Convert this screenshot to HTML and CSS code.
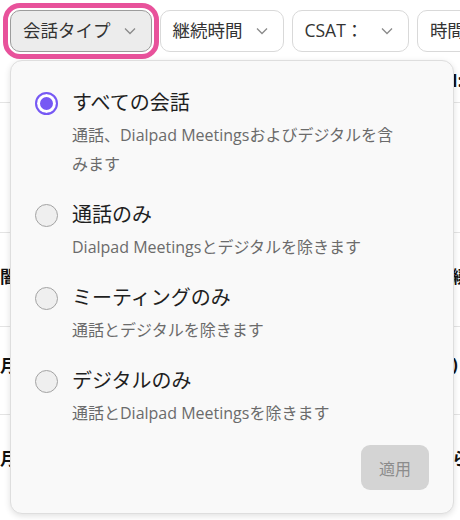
FILE: index.html
```html
<!DOCTYPE html>
<html lang="ja">
<head>
<meta charset="utf-8">
<link rel="stylesheet" href="styles.css">
</head>
<body>
<div class="page">
  <div class="toolbar">
    <button class="chip chip-active">会話タイプ<svg class="chev" viewBox="0 0 12 8"><path d="M1 1.5l5 5 5-5"/></svg></button>
    <button class="chip">継続時間<svg class="chev" viewBox="0 0 12 8"><path d="M1 1.5l5 5 5-5"/></svg></button>
    <button class="chip">CSAT：&nbsp;<svg class="chev" viewBox="0 0 12 8"><path d="M1 1.5l5 5 5-5"/></svg></button>
    <button class="chip">時間帯<svg class="chev" viewBox="0 0 12 8"><path d="M1 1.5l5 5 5-5"/></svg></button>
  </div>

  <div class="table">
    <div class="row row-head"><span class="cell-l"></span><span class="cell-r">I:</span></div>
    <div class="row row-a"><span class="cell-l"></span><span class="cell-r"></span></div>
    <div class="row row-b"><span class="cell-l">闇</span><span class="cell-r">綴</span></div>
    <div class="row row-c"><span class="cell-l">月</span><span class="cell-r">)</span></div>
    <div class="row row-d"><span class="cell-l">月</span><span class="cell-r">ら</span></div>
  </div>

  <div class="panel">
    <div class="options">
      <label class="option">
        <span class="radio radio-on"></span>
        <span class="opt-text">
          <span class="opt-title">すべての会話</span>
          <span class="opt-desc">通話、Dialpad Meetingsおよびデジタルを含みます</span>
        </span>
      </label>
      <label class="option">
        <span class="radio"></span>
        <span class="opt-text">
          <span class="opt-title">通話のみ</span>
          <span class="opt-desc">Dialpad Meetingsとデジタルを除きます</span>
        </span>
      </label>
      <label class="option">
        <span class="radio"></span>
        <span class="opt-text">
          <span class="opt-title">ミーティングのみ</span>
          <span class="opt-desc">通話とデジタルを除きます</span>
        </span>
      </label>
      <label class="option">
        <span class="radio"></span>
        <span class="opt-text">
          <span class="opt-title">デジタルのみ</span>
          <span class="opt-desc">通話とDialpad Meetingsを除きます</span>
        </span>
      </label>
    </div>
    <div class="actions">
      <button class="apply">適用</button>
    </div>
  </div>
</div>
</body>
</html>
```

FILE: styles.css
```css
* { box-sizing: border-box; }

html, body {
  margin: 0;
  padding: 0;
  background: #ffffff;
}

body {
  font-family: "Open Sans", "Noto Sans CJK JP", sans-serif;
  color: #222;
  width: 460px;
  height: 520px;
  overflow: hidden;
}

.page {
  position: relative;
  width: 460px;
  height: 520px;
  overflow: hidden;
}

.toolbar {
  display: flex;
  gap: 8px;
  padding: 10px 0 0 10px;
  white-space: nowrap;
}

.chip {
  flex: none;
  display: flex;
  align-items: center;
  gap: 13px;
  height: 42px;
  padding: 0 15px 0 12px;
  border: 1px solid #d9d9d9;
  border-radius: 10px;
  background: #fff;
  color: #333;
  font-family: inherit;
  font-size: 17.5px;
  line-height: 1;
}

.chip-active {
  background: #ececec;
  border-color: #9c9c9c;
  outline: 5px solid #e8529b;
  outline-offset: 2px;
}

.chev {
  width: 12px;
  height: 8px;
  fill: none;
  stroke: #8a8a8a;
  stroke-width: 1.3;
}

.table {
  margin-top: 8px;
  display: flex;
  flex-direction: column;
}

.row {
  display: grid;
  grid-template-columns: 452px 60px;
  align-items: center;
  border-bottom: 1px solid #e4e4e4;
  font-weight: 700;
  font-size: 17px;
  color: #111;
}

.row-head { height: 43px; padding-bottom: 2px; }
.row-a { height: 130px; }
.row-b { height: 94px; padding-bottom: 8px; }
.row-c { height: 88px; padding-bottom: 12px; }
.row-d { height: 95px; padding-bottom: 10px; border-bottom: none; }

.panel {
  position: absolute;
  left: 10px;
  top: 60px;
  width: 444px;
  height: 454px;
  background: #f9f9f9;
  border: 1px solid #dedede;
  border-radius: 12px;
  box-shadow: 0 2px 6px rgba(0, 0, 0, 0.12);
  padding: 28px 24px 23px 24px;
  display: flex;
  flex-direction: column;
}

.options {
  display: flex;
  flex-direction: column;
  gap: 22px;
}

.option {
  display: flex;
  align-items: flex-start;
  gap: 14px;
}

.radio {
  flex: none;
  width: 23px;
  height: 23px;
  margin-top: 3px;
  border-radius: 50%;
  border: 1.5px solid #a3a3a3;
  background: #efefef;
}

.radio-on {
  border: 2px solid #7658f4;
  background: #fff;
  box-shadow: inset 0 0 0 3px #fff, inset 0 0 0 12px #7658f4;
}

.opt-text {
  display: flex;
  flex-direction: column;
  width: 328px;
}

.opt-title {
  font-size: 20px;
  line-height: 28px;
  color: #1f1f1f;
}

.opt-desc {
  margin-top: 4px;
  font-size: 16px;
  line-height: 29px;
  color: #6b6b6b;
}

.actions {
  margin-top: auto;
  display: flex;
  justify-content: flex-end;
}

.apply {
  width: 68px;
  height: 45px;
  border: none;
  border-radius: 9px;
  background: #d4d4d4;
  color: #8c8c8c;
  font-family: inherit;
  font-size: 16px;
}
```
